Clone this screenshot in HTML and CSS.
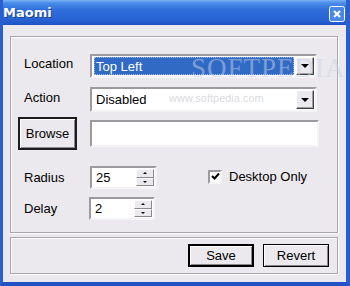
FILE: index.html
```html
<!DOCTYPE html>
<html lang="en">
<head>
    <meta charset="UTF-8">
    <title>Maomi</title>
    <link rel="stylesheet" href="styles.css">
</head>
<body>
    <div class="window">
        <div class="titlebar">
            <span class="title">Maomi</span>
            <span class="close">
                <svg width="16" height="16" viewBox="0 0 16 16">
                    <rect x="0.5" y="0.5" width="15" height="15" rx="2" fill="#4a88e8" stroke="#ffffff"/>
                    <path d="M5 5 L11 11 M11 5 L5 11" stroke="#ffffff" stroke-width="2"/>
                </svg>
            </span>
        </div>

        <div class="client">
            <div class="panel main">
                <div class="row row-location">
                    <span class="label">Location</span>
                    <div class="combo">
                        <span class="value selected">Top Left</span>
                        <span class="drop"><i></i></span>
                    </div>
                </div>
                <div class="row row-action">
                    <span class="label">Action</span>
                    <div class="combo">
                        <span class="value">Disabled</span>
                        <span class="drop"><i></i></span>
                    </div>
                </div>
                <div class="row row-browse">
                    <button class="btn browse">Browse</button>
                    <div class="field path"></div>
                </div>
                <div class="row row-radius">
                    <span class="label">Radius</span>
                    <div class="spin">
                        <span class="num">25</span>
                        <span class="arrows"><b class="up"></b><b class="down"></b></span>
                    </div>
                    <label class="check">
                        <span class="box">
                            <svg width="9" height="9" viewBox="0 0 9 9"><path d="M1 4 L3.5 6.5 L8 1.5" stroke="#000" stroke-width="2" fill="none"/></svg>
                        </span>
                        Desktop Only
                    </label>
                </div>
                <div class="row row-delay">
                    <span class="label">Delay</span>
                    <div class="spin">
                        <span class="num">2</span>
                        <span class="arrows"><b class="up"></b><b class="down"></b></span>
                    </div>
                </div>
            </div>

            <div class="panel footer">
                <button class="btn default">Save</button>
                <button class="btn">Revert</button>
            </div>
        </div>

        <!-- watermark from the original capture -->
        <div class="mark-big">SOFTPEDIA</div>
        <div class="mark-small">www.softpedia.com</div>
    </div>
</body>
</html>
```

FILE: styles.css
```css
/* General */
body {
    margin: 0;
    font-family: "Liberation Sans", Arial, sans-serif;
    font-size: 13px;
    color: #000;
}

/* Window frame */
.window {
    position: relative;
    width: 350px;
    height: 286px;
    box-sizing: border-box;
    background: #ebe9ed;
    border-left: 3px solid #2a5fd0;
    border-right: 4px solid #2a5fd0;
    border-bottom: 4px solid #2352c4;
    display: flex;
    flex-direction: column;
    overflow: hidden;
}

.titlebar {
    height: 25px;
    margin: 0 -4px 0 -3px;
    padding: 0 5px 0 3px;
    display: flex;
    align-items: center;
    justify-content: space-between;
    background: linear-gradient(#78b2f4 0, #4a8ce9 3px, #2f6edb 10px, #2a66d6 18px, #1f55c6 25px);
}

.title {
    font-family: "DejaVu Sans", sans-serif;
    font-weight: bold;
    font-size: 13px;
    color: #fff;
    text-shadow: 1px 1px 0 #1a3f95;
}

.close {
    display: flex;
    margin-top: 2px;
}

/* Client area */
.client {
    flex: 1;
    padding: 11px 8px 8px 7px;
    display: flex;
    flex-direction: column;
    gap: 4px;
}

.panel {
    border: 1px solid #a8a6ab;
    box-shadow: inset 1px 1px 0 #fff, 1px 1px 0 #fff;
    box-sizing: border-box;
}

.panel.main {
    height: 197px;
    padding: 0 18px 0 7px;
}

.panel.footer {
    flex: 1;
    display: flex;
    justify-content: flex-end;
    align-items: center;
    gap: 9px;
    padding: 0 8px 0 0;
}

/* Rows */
.row {
    display: flex;
    align-items: center;
}

.label {
    width: 72px;
    padding-left: 6px;
    box-sizing: border-box;
    flex: none;
}

.row-location .label,
.row-action .label {
    margin-top: -5px;
}

.row-location { margin-top: 17px; height: 24px; }
.row-action { margin-top: 9px; height: 25px; }
.row-browse { margin-top: 5px; height: 33px; }
.row-radius { margin-top: 16px; height: 23px; }
.row-delay { margin-top: 8px; height: 23px; }

/* Combo boxes */
.combo {
    flex: 1;
    margin-right: 2px;
    height: 100%;
    box-sizing: border-box;
    background: #fff;
    border: 2px solid;
    border-color: #9c9a9f #f4f3f5 #f4f3f5 #9c9a9f;
    display: flex;
    align-items: center;
    padding: 1px 1px 1px 2px;
}

.combo .value {
    flex: 1;
    height: 100%;
    display: flex;
    align-items: center;
    padding-left: 2px;
}

.combo .value.selected {
    background: #316ac5;
    color: #fff;
    outline: 1px dotted #a0b8e0;
    outline-offset: -1px;
}

.drop {
    width: 18px;
    height: 100%;
    margin-left: 2px;
    box-sizing: border-box;
    background: #ebe9ed;
    border: 1px solid;
    border-color: #fff #404040 #404040 #fff;
    box-shadow: inset -1px -1px 0 #a0a0a0;
    display: flex;
    align-items: center;
    justify-content: center;
}

.drop i {
    border-left: 4px solid transparent;
    border-right: 4px solid transparent;
    border-top: 4px solid #000;
}

/* Text field */
.field.path {
    flex: 1;
    height: 27px;
    margin-left: 13px;
    box-sizing: border-box;
    background: #fff;
    border: 2px solid;
    border-color: #9c9a9f #f4f3f5 #f4f3f5 #9c9a9f;
}

/* Buttons */
.btn {
    font-family: "Liberation Sans", Arial, sans-serif;
    font-size: 13px;
    color: #000;
    background: #ebe9ed;
    border: 1px solid #000;
    box-shadow: inset 1px 1px 0 #fff, inset -1px -1px 0 #8a888c;
    padding: 0;
    width: 66px;
    height: 23px;
    box-sizing: border-box;
}

.btn.browse {
    width: 59px;
    height: 33px;
    border: 2px solid #1c1c1c;
    box-shadow: inset 1px 1px 0 #fff, inset -1px -1px 0 #8a888c;
}

.btn.default {
    border: 2px solid #000;
}

/* Spin boxes */
.spin {
    width: 67px;
    height: 100%;
    box-sizing: border-box;
    background: #fff;
    border: 2px solid;
    border-color: #9c9a9f #f4f3f5 #f4f3f5 #9c9a9f;
    display: flex;
    align-items: center;
    padding: 1px;
}

.row-delay .spin {
    width: 66px;
    margin-left: -1px;
}

.spin .num {
    flex: 1;
    padding-left: 3px;
}

.arrows {
    width: 18px;
    height: 100%;
    display: flex;
    flex-direction: column;
}

.arrows b {
    flex: 1;
    background: #ebe9ed;
    border: 1px solid;
    border-color: #fff #8a888c #8a888c #fff;
    display: flex;
    align-items: center;
    justify-content: center;
}

.arrows b::after {
    content: "";
    border-left: 2px solid transparent;
    border-right: 2px solid transparent;
}

.arrows .up::after { border-bottom: 2px solid #000; }
.arrows .down::after { border-top: 2px solid #000; }

/* Checkbox */
.check {
    display: flex;
    align-items: center;
    gap: 7px;
    margin-left: 51px;
    margin-top: -2px;
}

.box {
    width: 14px;
    height: 14px;
    box-sizing: border-box;
    background: #fff;
    border: 2px solid;
    border-color: #9c9a9f #f4f3f5 #f4f3f5 #9c9a9f;
    display: flex;
    align-items: center;
    justify-content: center;
}

/* Watermark overlay */
.mark-big {
    position: absolute;
    left: 188px;
    top: 53px;
    font-family: "Liberation Serif", serif;
    font-size: 27px;
    letter-spacing: 1px;
    color: rgba(200, 210, 230, 0.5);
}

.mark-small {
    position: absolute;
    left: 166px;
    top: 92px;
    font-size: 11px;
    color: rgba(180, 180, 190, 0.5);
}
```
